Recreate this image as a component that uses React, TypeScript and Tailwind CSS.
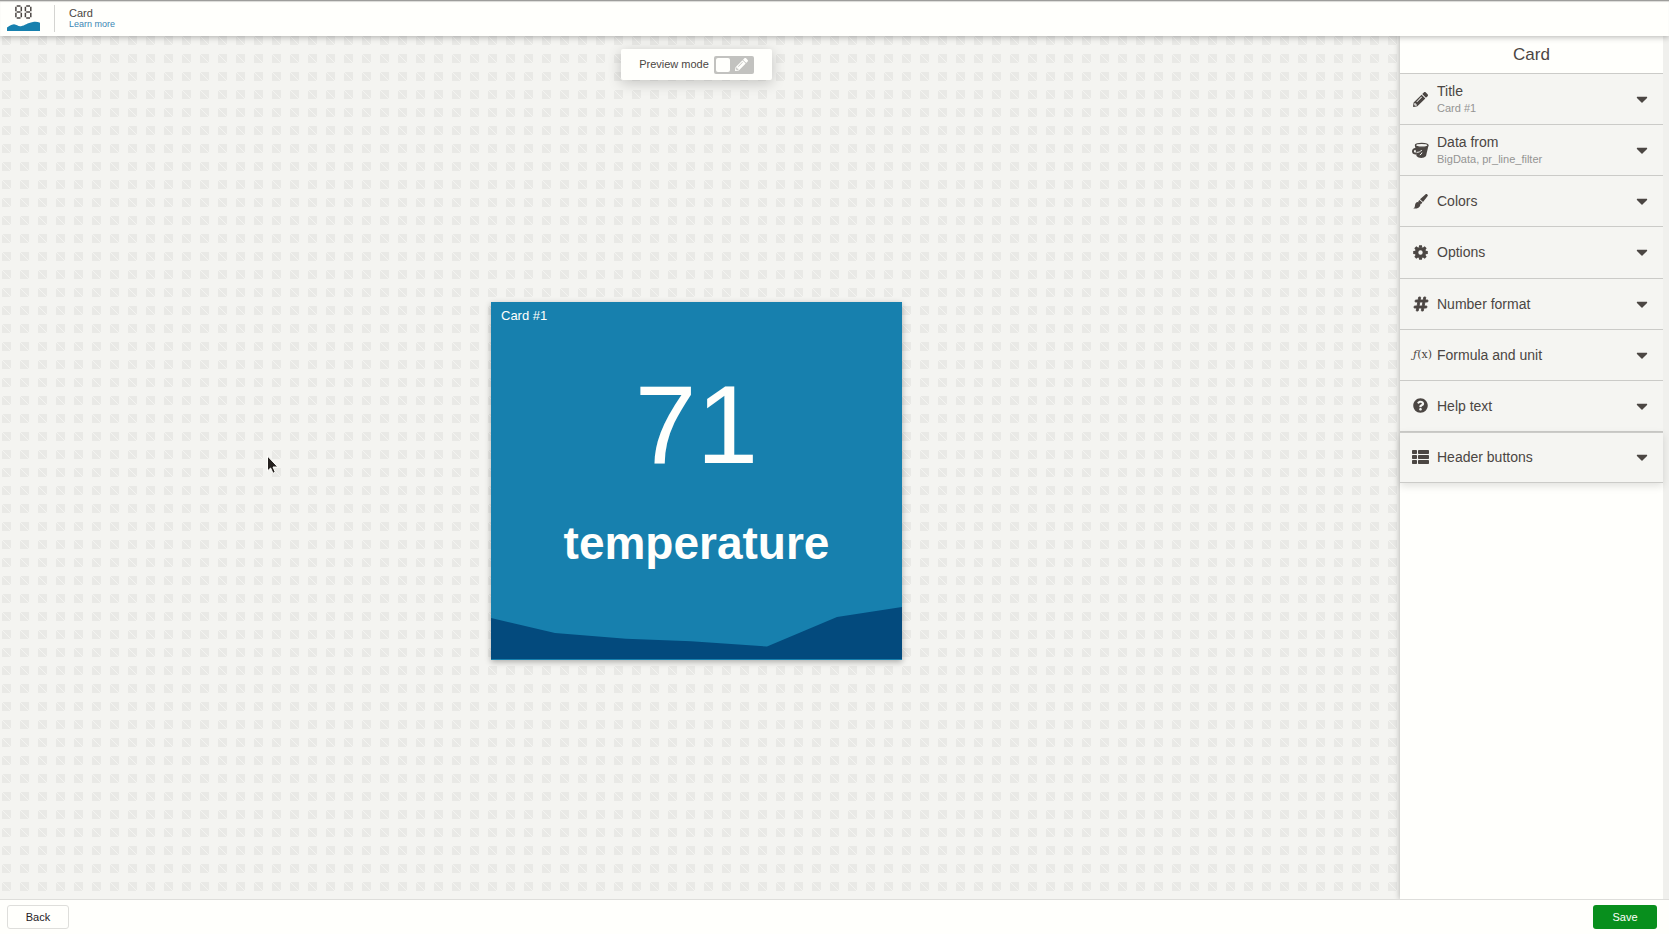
import { useState, type ReactNode } from "react";
import { FaCaretDown, FaHashtag, FaPencilAlt, FaQuestionCircle } from "react-icons/fa";

function Digit({ x }: { x: number }) {
  return (
    <path
      transform={`translate(${x} 0)`}
      d="M1.700.9h3.800M1.700 7h3.800M1.700 13.100h3.800M.9 1.700v4.500M6.300 1.700v4.500M.9 7.800v4.500M6.300 7.800v4.500"
      fill="none"
      stroke="#4b4643"
      strokeWidth="1.500"
    />
  );
}

function Logo() {
  return (
    <svg viewBox="0 0 33 26" className="h-[26px] w-[33px]" aria-hidden="true">
      <Digit x={8} />
      <Digit x={17.5} />
      <path d="M0 26V22.500C2 21.500 4 19.500 7 19.300C10 19.500 11 21.700 14 21.200C18 20.500 20 18 26 17C29 16.500 31 17 33 17.800V26Z" fill="#1780ae" />
    </svg>
  );
}

function BrushIcon() {
  return (
    <svg viewBox="0 0 15 15" className="size-[15px]" fill="currentColor" aria-hidden="true">
      <path d="M14.300.4c.7.5.7 1.200.2 1.900L10 8 7 5.300 12.400.4c.6-.5 1.200-.5 1.900 0ZM6.500 5.900 9.400 8.600 8 10.200 5.100 7.400ZM4.800 8c1.900.2 2.800 1.300 2.600 2.900C7 13.700 3.600 15 .2 14.500c1.300-.5 1.600-1.500 1.800-3C2.200 9.400 3.100 8 4.800 8Z" />
    </svg>
  );
}

function BucketIcon() {
  return (
    <svg viewBox="0 0 17 17" className="size-[17px]" aria-hidden="true">
      <path d="M3 3.500 4.500 14C6.500 16.600 12 16.600 14 14L16.500 3.500Z" fill="currentColor" />
      <ellipse cx="9.700" cy="3.300" rx="6.300" ry="1.900" fill="#f5f5f2" stroke="currentColor" strokeWidth="1.300" />
      <path d="M4 7C1.800 6.600.8 8 1 9.600s1.500 2.300 3.300 1.800" fill="none" stroke="currentColor" strokeWidth="1.900" />
      <path d="M4.500 10.300c2 .2 4-.6 5.300-2.300M7.800 13c1.200-.5 1.900-1.300 2.200-2.400" fill="none" stroke="#f5f5f2" strokeWidth="1" />
    </svg>
  );
}

const teeth = [0, 45, 90, 135];

function GearIcon() {
  return (
    <svg viewBox="0 0 15 15" className="size-[15px]" aria-hidden="true">
      <circle cx="7.500" cy="7.500" r="3.900" fill="none" stroke="currentColor" strokeWidth="3.400" />
      {teeth.map((angle) => (
        <path
          key={angle}
          transform={`rotate(${angle} 7.5 7.5)`}
          d="M6.100.2h2.800l.4 2.400H5.700ZM6.100 14.800h2.800l.4-2.400H5.700Z"
          fill="currentColor"
        />
      ))}
    </svg>
  );
}

function ListIcon() {
  return (
    <svg viewBox="0 0 17 14" className="h-[14px] w-[17px]" fill="currentColor" aria-hidden="true">
      <rect x="0" y="0" width="5" height="4" rx=".7" />
      <rect x="6" y="0" width="11" height="4" rx=".7" />
      <rect x="0" y="5" width="5" height="4" rx=".7" />
      <rect x="6" y="5" width="11" height="4" rx=".7" />
      <rect x="0" y="10" width="5" height="4" rx=".7" />
      <rect x="6" y="10" width="11" height="4" rx=".7" />
    </svg>
  );
}

type Section = { title: string; detail?: string; icon: ReactNode };

const sections: Section[] = [
  { title: "Title", detail: "Card #1", icon: <FaPencilAlt size={15} /> },
  { title: "Data from", detail: "BigData, pr_line_filter", icon: <BucketIcon /> },
  { title: "Colors", icon: <BrushIcon /> },
  { title: "Options", icon: <GearIcon /> },
  { title: "Number format", icon: <FaHashtag size={16} stroke="currentColor" strokeWidth={28} /> },
  {
    title: "Formula and unit",
    icon: <span className="pl-1 font-['DejaVu_Serif',serif] text-[11px] leading-4 whitespace-nowrap"><i>ƒ</i>(x)</span>,
  },
  { title: "Help text", icon: <FaQuestionCircle size={15} /> },
  { title: "Header buttons", icon: <ListIcon /> },
];

function SectionRow({ title, detail, icon }: Section) {
  return (
    <li className="flex border-b border-[#cbcbc8] bg-[#f5f5f2] last:border-t last:shadow-[0_3px_8px_rgba(0,0,0,0.12)]">
      <button type="button" className="flex w-full items-center pr-3 pl-3 text-left">
        <span className="flex w-[17px] shrink-0 items-center justify-center">{icon}</span>
        <span className="ml-2 flex grow flex-col">
          <span className="text-sm leading-[18px]">{title}</span>
          {detail && <span className="text-[11px] leading-4 text-[#949492]">{detail}</span>}
        </span>
        <FaCaretDown size={18} />
      </button>
    </li>
  );
}

function ValueCard() {
  return (
    <article className="flex h-[358px] w-[411px] flex-col bg-[#1780ae] pb-px text-[#fffffc] shadow-[0_2px_6px_rgba(0,0,0,0.3)]">
      <h2 className="px-[10px] pt-[6px] text-[13px] leading-4">Card #1</h2>
      <p className="mt-[37px] text-center text-[111px] leading-[128px]">71</p>
      <p className="mt-[27px] text-center text-[46px] leading-[54px] font-bold">temperature</p>
      <svg viewBox="0 0 411 53" preserveAspectRatio="none" className="mt-auto h-[53px] w-full" aria-hidden="true">
        <path d="M0 12 64 27 135 32.800 200 35.300 276 40.500 346 11 411 1V53H0Z" fill="#034a7d" />
      </svg>
    </article>
  );
}

export default function App() {
  const [preview, setPreview] = useState(false);

  return (
    <div className="flex h-screen flex-col bg-[#fffffc] font-['Liberation_Sans',Arial,sans-serif] text-[#4b4643]">
      <header className="relative z-10 flex h-9 shrink-0 items-center border-t border-[#9d9d9b] bg-[#fffffc] pb-px pl-[7px] shadow-[0_1px_6px_rgba(0,0,0,0.3),inset_0_1px_1px_rgba(0,0,0,0.15)]">
        <Logo />
        <span className="ml-[14px] h-[27px] w-px bg-[#d4d4d1]" />
        <div className="ml-[14px] flex flex-col pb-px">
          <h1 className="text-[11px] leading-3">Card</h1>
          <a href="#learn" className="text-[9px] leading-[10px] text-[#3b86b5]">Learn more</a>
        </div>
      </header>

      <div className="flex min-h-0 grow">
        <main className="relative flex grow flex-col items-center bg-[#f4f4f1] bg-[linear-gradient(45deg,transparent_49%,#f4f4f1_49%,#f4f4f1_51%,transparent_51%),conic-gradient(at_9px_9px,transparent_270deg,#e9e9e6_270deg)] bg-[size:18px_18px] bg-[position:2px_0px] pt-[13px] pr-[7px]">
          <label className="relative flex h-[31px] w-[151px] shrink-0 items-center justify-center rounded-[2px] bg-[#fffffc] text-[11px] shadow-[0_3px_14px_rgba(0,0,0,0.2)]">
            Preview mode
            <input
              type="checkbox"
              className="peer sr-only"
              checked={preview}
              onChange={(e) => setPreview(e.target.checked)}
            />
            <span className="ml-[5px] flex h-[18px] w-10 items-center justify-between rounded-[2px] bg-[#c2c2bf] pr-[6px] pl-[2px] text-[#fffffc] peer-checked:flex-row-reverse">
              <span className="h-[14px] w-[14px] rounded-[2px] bg-[#fffffc]" />
              <FaPencilAlt size={13} />
            </span>
          </label>
          <div className="flex grow items-center pb-[17px]">
            <ValueCard />
          </div>
          <svg viewBox="0 0 14 20" className="absolute top-[419px] left-[265px] h-5 w-[14px]" aria-hidden="true">
            <path d="M2.500 1V16L5.600 13 8 18.300 10.300 17.200 8 12H12.800Z" fill="#25211f" stroke="#fffffc" strokeWidth="1" />
          </svg>
        </main>

        <aside className="relative flex w-[269px] shrink-0 bg-[#f0f0ed] pr-[6px] shadow-[0_0_6px_rgba(0,0,0,0.3)]">
          <div className="grow bg-[#fffffc]">
            <h2 className="flex h-[38px] items-center justify-center border-b border-[#cbcbc8] text-[17px] leading-5">Card</h2>
            <ul className="grid h-[409px] auto-rows-fr">
              {sections.map((s) => (
                <SectionRow key={s.title} {...s} />
              ))}
            </ul>
          </div>
        </aside>
      </div>

      <footer className="relative flex h-[35px] shrink-0 items-center justify-between border-t border-[#dededb] bg-[#fffffc] pr-3 pl-[7px] text-[11px]">
        <button type="button" className="h-6 w-[62px] rounded-[3px] border border-[#dededb] text-[#25211f]">Back</button>
        <button type="button" className="h-6 w-16 rounded-[3px] bg-[#088f1d] text-[#fffffc]">Save</button>
      </footer>
    </div>
  );
}
